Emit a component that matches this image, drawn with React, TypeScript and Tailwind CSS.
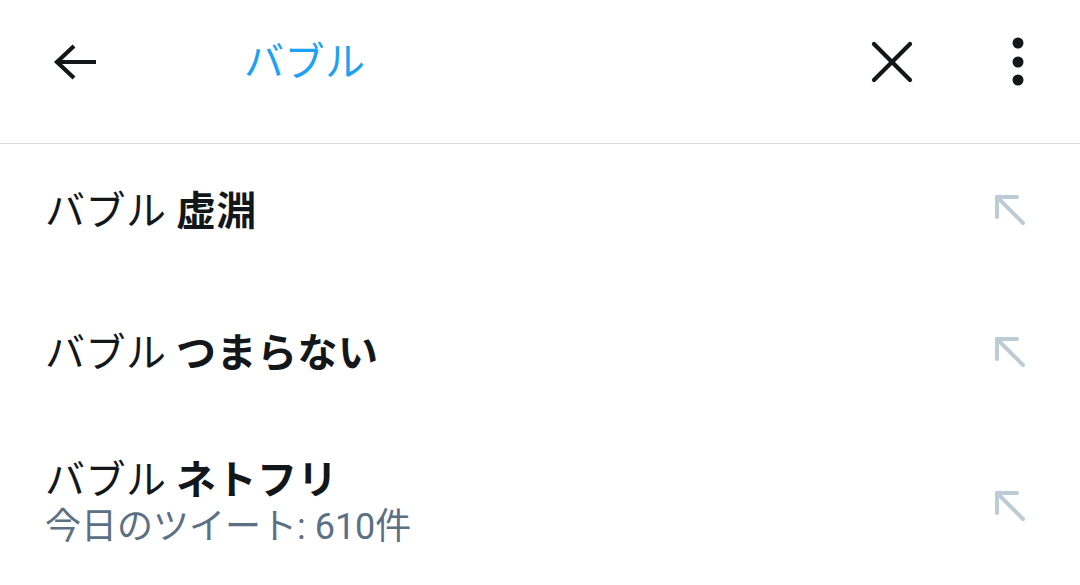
import React from 'react';

const font = { fontFamily: '"Noto Sans CJK JP", "Noto Sans", sans-serif' };

function NwArrow() {
  return (
    <svg className="mt-[5px]" width="36" height="36" viewBox="0 0 36 36" fill="none" stroke="#bccbd4" strokeWidth="4" strokeLinecap="round" strokeLinejoin="round">
      <path d="M4 4 L30 30" />
      <path d="M4 24 V4 H24" />
    </svg>
  );
}

const rows = [
  { bold: '虚淵', h: 'h-[128px]' },
  { bold: 'つまらない', h: 'h-[156px]' },
  { bold: 'ネトフリ', h: 'h-[152px]', sub: '今日のツイート: 610件' },
];

export default function App() {
  return (
    <div className="w-[1080px] h-[585px] bg-white overflow-hidden text-[#14171a]" style={font}>
      {/* Header */}
      <div className="h-[144px] flex items-center border-b border-[#d5dde3] pb-[20px]">
        <div className="w-[244px] pl-[52px] flex items-center">
          <svg width="46" height="36" viewBox="0 0 46 36" fill="none" stroke="#14171a" strokeWidth="4.2">
            <path d="M44 18 H6" />
            <path d="M22 2 L5 18 L22 34" />
          </svg>
        </div>
        <div className="flex-1 text-[40px] text-[#1da1f2] leading-none tracking-[0.5px] mb-[6px]">バブル</div>
        <div className="w-[80px] flex justify-center mr-[18px]">
          <svg width="46" height="46" viewBox="0 0 46 46" fill="none" stroke="#14171a" strokeWidth="4.2" strokeLinecap="round">
            <path d="M5 5 L41 41" />
            <path d="M41 5 L5 41" />
          </svg>
        </div>
        <div className="w-[130px] flex justify-center pl-[6px]">
          <svg width="14" height="52" viewBox="0 0 14 52" fill="#14171a">
            <circle cx="7" cy="7" r="5.5" />
            <circle cx="7" cy="26" r="5.5" />
            <circle cx="7" cy="44" r="5.5" />
          </svg>
        </div>
      </div>

      {/* Suggestions */}
      {rows.map((r) => (
        <div key={r.bold} className={`${r.h} flex items-center justify-between pl-[45px] pr-[51px]`}>
          <div className="flex flex-col">
            <div className="text-[40px] leading-[46px] tracking-[0.5px]">
              バブル <span className="font-bold">{r.bold}</span>
            </div>
            {r.sub && (
              <div className="text-[36px] leading-[54px] text-[#5b7083]" style={{ fontFamily: 'Roboto, "Noto Sans CJK JP", sans-serif' }}>
                {r.sub}
              </div>
            )}
          </div>
          <NwArrow />
        </div>
      ))}
    </div>
  );
}
